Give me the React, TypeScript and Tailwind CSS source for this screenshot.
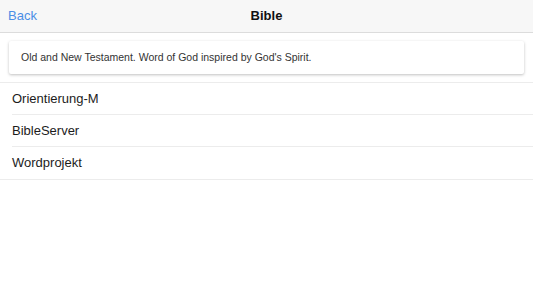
const LINKS = ["Orientierung-M", "BibleServer", "Wordprojekt"];

export default function App() {
  return (
    <div className="h-[300px] w-full bg-white font-['Liberation_Sans',Arial,sans-serif] text-[#1c1c1c]">
      {/* NAV BAR */}
      <div className="relative flex h-[33px] items-center justify-center border-b border-[#dcdcdc] bg-[#f7f7f7]">
        <button className="absolute left-[8px] top-0 flex h-full items-center text-[13px] text-[#4a8ee6]">
          Back
        </button>
        <h1 className="text-[13px] font-bold text-[#111]">Bible</h1>
      </div>

      {/* DESCRIPTION CARD */}
      <div className="border-b border-[#ececec] px-[9px] pb-[8px] pt-[8px]">
        <div className="flex h-[33px] items-center rounded-[2px] bg-white px-[12px] text-[10.5px] text-[#333] shadow-[0_1px_3px_rgba(0,0,0,0.25)]">
          Old and New Testament. Word of God inspired by God's Spirit.
        </div>
      </div>

      {/* LINK LIST */}
      <ul className="border-b border-[#ececec]">
        {LINKS.map((name, i) => (
          <li key={name} className="pl-[12px]">
            <div
              className={`flex h-[32px] items-center text-[13px] ${
                i < LINKS.length - 1 ? "border-b border-[#ececec]" : ""
              }`}
            >
              {name}
            </div>
          </li>
        ))}
      </ul>
    </div>
  );
}
